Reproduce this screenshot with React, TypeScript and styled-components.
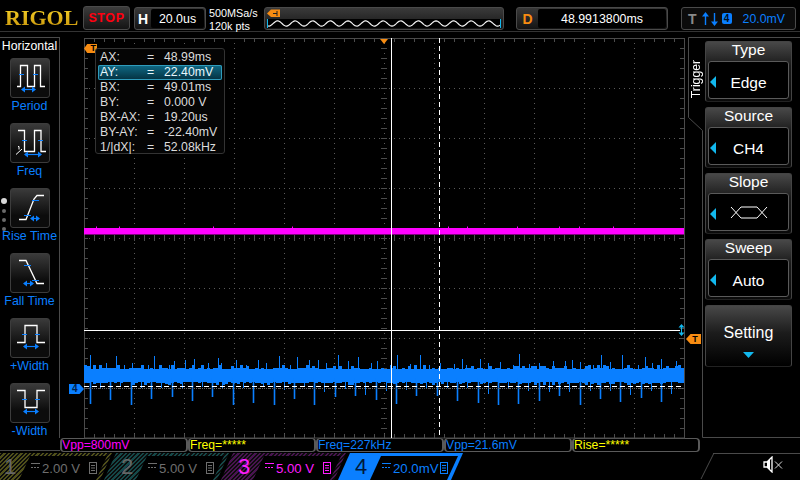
import React, { useMemo } from "react";
import styled, { createGlobalStyle } from "styled-components";

const BLUE = "#0a7fff";
const CYAN = "#12b8ee";
const ORANGE = "#f78c12";
const LINE = "#4a4a4a";

const Global = createGlobalStyle`
  html, body { margin: 0; padding: 0; background: #000; }
  body { font-family: "Liberation Sans", Arial, sans-serif; color: #fff; }
`;

const Page = styled.div`
  width: 800px;
  height: 480px;
  background: #000;
  overflow: hidden;
  display: flex;
  flex-direction: column;
`;

/* ---------- top bar ---------- */
const TopBar = styled.header`
  height: 32px;
  box-sizing: border-box;
  border-bottom: 1px solid #333;
  padding: 6px 0 0 5px;
  display: flex;
  align-items: flex-start;
`;
const Logo = styled.div`
  width: 74px;
  margin-top: 1px;
  font: bold 22px/21px "Liberation Serif", serif;
  background: linear-gradient(#f8d428, #c9960c);
  -webkit-background-clip: text;
  background-clip: text;
  color: transparent;
`;
const StopButton = styled.div`
  width: 47px;
  height: 24px;
  margin-left: 4px;
  box-sizing: border-box;
  border: 1px solid #4a4a4a;
  border-radius: 3px;
  background: linear-gradient(#3c3c3c, #141414);
  color: #ff0010;
  font-weight: bold;
  font-size: 12.5px;
  letter-spacing: 0.6px;
  line-height: 22px;
  text-align: center;
`;
const TopBox = styled.div<{ $w: number; $ml: number }>`
  width: ${(p) => p.$w}px;
  height: 23px;
  margin-left: ${(p) => p.$ml}px;
  margin-top: 1px;
  box-sizing: border-box;
  border: 1px solid #4a4a4a;
  border-radius: 3px;
  background: linear-gradient(#383838, #141414);
  display: flex;
  align-items: center;
`;
const BoxLetter = styled.span<{ $color: string; $w: number }>`
  width: ${(p) => p.$w}px;
  text-align: center;
  font-weight: bold;
  font-size: 14px;
  color: ${(p) => p.$color};
`;
const BoxValue = styled.span`
  flex: 1;
  align-self: stretch;
  margin: 1px 1px 1px 0;
  background: #000;
  border-radius: 2px;
  font-size: 12.4px;
  line-height: 20px;
  text-align: center;
`;
const SampleInfo = styled.div`
  width: 55px;
  margin-left: 3px;
  font-size: 10.8px;
  line-height: 13px;
  padding-top: 1px;
`;
const MemoryBar = styled.div`
  width: 240px;
  height: 23px;
  margin-top: 1px;
  box-sizing: border-box;
  border: 1px solid #4a4a4a;
  border-radius: 3px;
  background: linear-gradient(#3a3a3a, #161616);
  padding: 1px 3px 0 2px;
  display: flex;
  flex-direction: column;
`;
const MemoryTag = styled.svg`
  width: 14px;
  height: 9px;
  display: block;
`;
const MemoryWave = styled.svg`
  margin-top: 1px;
  width: 234px;
  height: 9px;
  display: block;
  background: #000;
`;
const TriggerBox = styled(TopBox)`
  background: #0c0c0c;
  padding-left: 6px;
`;
const TLetter = styled.span`
  font-weight: bold;
  font-size: 14px;
  color: #8a8a8a;
`;
const ArrowPair = styled.svg`
  width: 17px;
  height: 14px;
  margin-left: 5px;
`;
const SourceBadge = styled.span`
  width: 10px;
  height: 11px;
  margin-left: 3px;
  border-radius: 2px;
  background: ${BLUE};
  color: #001020;
  font-size: 10px;
  font-weight: bold;
  line-height: 11px;
  text-align: center;
`;
const TriggerLevel = styled.span`
  margin-left: 11px;
  font-size: 12.3px;
  color: ${BLUE};
`;

/* ---------- main ---------- */
const Main = styled.div`
  height: 420px;
  display: flex;
`;
const LeftColumn = styled.aside`
  width: 60px;
  flex: none;
  display: flex;
  flex-direction: column;
`;
const LeftFrame = styled.div`
  height: 401px;
  margin-top: 5px;
  box-sizing: border-box;
  border-top: 1px solid ${LINE};
  border-right: 1px solid ${LINE};
  position: relative;
`;
const LeftFoot = styled.div`
  margin-top: 12px;
  border-top: 1px solid ${LINE};
`;
const PanelTitle = styled.div`
  font-size: 12.3px;
  line-height: 16px;
  text-align: center;
  margin-bottom: 4px;
`;
const MeasureItem = styled.div`
  height: 65px;
  display: flex;
  flex-direction: column;
  align-items: center;
`;
const IconButton = styled.div`
  width: 40px;
  height: 40px;
  box-sizing: border-box;
  border: 1px solid #3c3c3c;
  border-radius: 3px;
  background: linear-gradient(#3a3a3a, #0c0c0c 70%);
  flex: none;
`;
const MeasureIcon = styled.svg`
  width: 38px;
  height: 38px;
  display: block;
`;
const MeasureLabel = styled.div`
  font-size: 12.4px;
  line-height: 16px;
  white-space: nowrap;
  color: ${BLUE};
`;
const PageDots = styled.div`
  position: absolute;
  left: 1px;
  top: 160px;
  display: flex;
  flex-direction: column;
  gap: 5px;
  align-items: center;
`;
const PageDot = styled.span<{ $on?: boolean }>`
  width: ${(p) => (p.$on ? 6 : 4)}px;
  height: ${(p) => (p.$on ? 6 : 4)}px;
  border-radius: 50%;
  background: ${(p) => (p.$on ? "#d8d8d8" : "#6a6a6a")};
`;

const CenterColumn = styled.main`
  width: 624px;
  flex: none;
  padding-top: 6px;
`;
const Screen = styled.div`
  margin-left: 24px;
  width: 600px;
  height: 400px;
  position: relative;
`;
const ScopeSvg = styled.svg`
  display: block;
  width: 600px;
  height: 400px;
  overflow: visible;
`;
const CursorBox = styled.div`
  position: absolute;
  left: 11px;
  top: 10px;
  width: 130px;
  height: 106px;
  box-sizing: border-box;
  padding: 1px 2px;
  background: #050505;
  border: 1px solid #333;
  border-radius: 3px;
`;
const CursorRow = styled.div<{ $active?: boolean }>`
  height: 15px;
  box-sizing: border-box;
  display: grid;
  grid-template-columns: 47px 17px 1fr;
  padding-left: 2px;
  font-size: 12.3px;
  line-height: 15px;
  color: ${(p) => (p.$active ? "#e8f6fb" : "#dcdcdc")};
  border-radius: 2px;
  ${(p) =>
    p.$active
      ? `background: linear-gradient(#0f6a86, #04303f); box-shadow: inset 0 0 0 1px #2f9cbc;`
      : ""}
`;
const TopLeftTag = styled.div`
  position: absolute;
  left: 0;
  top: 6px;
  width: 13px;
  height: 9px;
  background: ${ORANGE};
  clip-path: polygon(0 50%, 25% 0, 100% 0, 100% 100%, 25% 100%);
  color: #000;
  font-size: 9px;
  font-weight: bold;
  line-height: 9px;
  text-align: right;
  padding-right: 1px;
  box-sizing: border-box;
`;
const TimeMarker = styled.div`
  position: absolute;
  left: 296px;
  top: 1px;
  width: 8px;
  height: 5px;
  background: ${ORANGE};
  clip-path: polygon(0 0, 100% 0, 50% 100%);
`;
const ChannelMarker = styled.div`
  position: absolute;
  left: -15px;
  top: 346px;
  width: 15px;
  height: 10px;
  background: ${BLUE};
  clip-path: polygon(0 0, 70% 0, 100% 50%, 70% 100%, 0 100%);
  color: #00224a;
  font-size: 10px;
  font-weight: bold;
  line-height: 10px;
  padding-left: 3px;
  box-sizing: border-box;
`;
const LevelTag = styled.div`
  position: absolute;
  left: 602px;
  top: 296px;
  width: 15px;
  height: 10px;
  background: ${ORANGE};
  clip-path: polygon(0 50%, 30% 0, 100% 0, 100% 100%, 30% 100%);
  color: #000;
  font-size: 9px;
  font-weight: bold;
  line-height: 10px;
  text-align: center;
  padding-left: 3px;
  box-sizing: border-box;
`;
const LevelArrow = styled.svg`
  position: absolute;
  left: 594px;
  top: 286px;
  width: 7px;
  height: 12px;
`;

const MeasureRow = styled.div`
  width: 640px;
  height: 14px;
  display: flex;
`;
const Readout = styled.div<{ $color: string }>`
  flex: 1;
  box-sizing: border-box;
  border: 1px solid #5a5a5a;
  border-width: 1px 2px;
  border-radius: 4px;
  font-size: 12.2px;
  line-height: 13px;
  color: ${(p) => p.$color};
  white-space: nowrap;
  overflow: hidden;
`;

const RightColumn = styled.aside`
  width: 116px;
  flex: none;
  position: relative;
  padding: 9px 0 0 21px;
  box-sizing: border-box;
  display: flex;
  flex-direction: column;
  gap: 5px;
`;
const RightOutline = styled.svg`
  position: absolute;
  left: 0;
  top: 0;
  width: 116px;
  height: 420px;
`;
const TriggerLabel = styled.div`
  position: absolute;
  left: 6px;
  top: 28px;
  writing-mode: vertical-rl;
  transform: rotate(180deg);
  font-size: 12.2px;
  line-height: 13px;
`;
const MenuCard = styled.div`
  position: relative;
  width: 87px;
  height: 61px;
  box-sizing: border-box;
  border: 1px solid #444;
  border-bottom-color: #222;
  border-radius: 3px;
  background: linear-gradient(#484848, #1a1a1a 40%, #0a0a0a);
  padding: 0 2px 2px;
  display: flex;
  flex-direction: column;
`;
const MenuTitle = styled.div`
  height: 19px;
  font-size: 15.5px;
  line-height: 16px;
  text-align: center;
  flex: none;
`;
const MenuValue = styled.div`
  flex: 1;
  position: relative;
  background: #000;
  border: 1px solid #5a5a5a;
  border-radius: 3px;
  box-sizing: border-box;
  padding-top: 6px;
  font-size: 15.5px;
  display: flex;
  align-items: center;
  justify-content: center;
`;
const MenuArrow = styled.span`
  position: absolute;
  left: 1px;
  top: 50%;
  margin-top: -4px;
  width: 6px;
  height: 12px;
  background: ${CYAN};
  clip-path: polygon(100% 0, 100% 100%, 0 50%);
`;
const SettingCard = styled(MenuCard)`
  height: 62px;
  background: linear-gradient(#484848, #1c1c1c 45%, #000);
  align-items: center;
  padding-top: 17px;
  font-size: 16px;
  line-height: 20px;
`;
const SettingArrow = styled.span`
  margin-top: 9px;
  width: 11px;
  height: 6px;
  background: ${CYAN};
  clip-path: polygon(0 0, 100% 0, 50% 100%);
`;
const SlopeIcon = styled.svg`
  width: 38px;
  height: 13px;
  margin-top: -6px;
`;

/* ---------- channel bar ---------- */
const ChannelBar = styled.footer`
  height: 28px;
  display: flex;
  padding-top: 1px;
  box-sizing: border-box;
  margin-left: -13px;
`;
const hatch = (c: string) =>
  `repeating-linear-gradient(135deg, ${c} 0 1.5px, #0c0c0c 1.5px 3px)`;
const ChannelTab = styled.div<{ $hatch?: string; $color: string }>`
  width: 125px;
  height: 27px;
  margin-right: -8px;
  flex: none;
  position: relative;
  background: ${(p) => (p.$hatch ? hatch(p.$hatch) : p.$color)};
  clip-path: polygon(12px 0, 100% 0, calc(100% - 12px) 100%, 0 100%);
  display: flex;
  align-items: flex-end;
`;
const ChannelNumber = styled.span<{ $color: string }>`
  width: 34px;
  padding-left: 17px;
  box-sizing: border-box;
  font-size: 22px;
  line-height: 27px;
  height: 27px;
  flex: none;
  color: ${(p) => p.$color};
`;
const ChannelInner = styled.div<{ $color: string }>`
  width: 88px;
  height: 24px;
  margin-left: -2px;
  background: #000;
  clip-path: polygon(11px 0, 100% 0, calc(100% - 11px) 100%, 0 100%);
  color: ${(p) => p.$color};
  display: flex;
  align-items: center;
  padding-left: 12px;
  box-sizing: border-box;
  font-size: 13.2px;
`;
const CouplingIcon = styled.svg`
  width: 9px;
  height: 7px;
  margin: -5px 2px 0 0;
  flex: none;
`;
const ChannelValue = styled.span`
  width: 47px;
  flex: none;
`;
const UnitBox = styled.svg`
  width: 8px;
  height: 12px;
  flex: none;
`;
const SoundArea = styled.div`
  position: relative;
  margin-left: auto;
  width: 87px;
  height: 26px;
  border-top: 1px solid ${LINE};
  display: flex;
  justify-content: flex-end;
  padding: 2px 16px 0 0;
  box-sizing: border-box;
  &::before {
    content: "";
    position: absolute;
    left: 0;
    top: 0;
    width: 1px;
    height: 100%;
    background: ${LINE};
    transform-origin: top left;
    transform: skewX(-26.6deg);
  }
`;
const SpeakerIcon = styled.svg`
  width: 21px;
  height: 17px;
`;

/* ---------- drawings ---------- */
type IconDef = {
  wave: string;
  marks: string;
  arrow: [number, number, number];
  half?: boolean;
};
const icons: Record<string, IconDef> = {
  Period: {
    wave: "M6 27.5H9.5V6.5H16.5V27.5H23.5V6.5H29.5V27.5H34",
    marks: "M8 15.5h5M22 15.5h5",
    arrow: [11, 24, 30],
  },
  Freq: {
    wave: "M7 6.5H13.5V27.5H23.5V6.5H30V27.5H35",
    marks: "M11 16.5h5M27 16.5h5",
    arrow: [14, 30, 30],
    half: true,
  },
  "Rise Time": {
    wave: "M8 30.5H15L23 10L26 6.5H33",
    marks: "M21 11.5h7M13 26.5h7",
    arrow: [20, 28, 29],
  },
  "Fall Time": {
    wave: "M8 6.5H15L26 29.5H33",
    marks: "M13 11.5h7M21 26.5h7",
    arrow: [13, 22, 29],
  },
  "+Width": {
    wave: "M6 23.5H14V6.5H26V23.5H34",
    marks: "M11 15.5h5M24 15.5h5",
    arrow: [13, 27, 27],
  },
  "-Width": {
    wave: "M6 6.5H14V23.5H26V6.5H34",
    marks: "M11 15.5h5M24 15.5h5",
    arrow: [13, 27, 27],
  },
};

const PulseIcon = ({ def }: { def: IconDef }) => {
  const [a, b, y] = def.arrow;
  return (
    <MeasureIcon viewBox="0 0 38 38">
      <path d={def.wave} fill="none" stroke="#fff" strokeWidth="1.3" />
      <path d={def.marks} fill="none" stroke={BLUE} strokeWidth="1" />
      <path d={`M${a} ${y + 0.5}H${b}`} stroke={BLUE} strokeWidth="1.2" />
      <path d={`M${a - 1} ${y + 0.5}l4 -3v6zM${b + 1} ${y + 0.5}l-4 -3v6z`} fill={BLUE} />
      {def.half && (
        <>
          <path d="M7 22.5h1v3" fill="none" stroke="#fff" strokeWidth="1" />
          <path d="M5 30.5L11 25" fill="none" stroke="#fff" strokeWidth="1" />
        </>
      )}
    </MeasureIcon>
  );
};

const rng = (seed: number) => {
  let s = seed;
  return () => {
    s = (s * 16807) % 2147483647;
    return s / 2147483647;
  };
};

const useScopeTraces = () =>
  useMemo(() => {
    const r = rng(12345);
    let band = "";
    let spikes = "";
    let thick = "";
    let magenta = "";
    let top = 330;
    let bot = 344;
    for (let x = 0; x < 600; x += 1) {
      if (x % 3 === 0) {
        top = 330 + Math.floor(r() * 2) - (r() > 0.8 ? 3 : 0);
        bot = 344 + Math.floor(r() * 2) + (r() > 0.8 ? 2 : 0);
      }
      band += `M${x + 0.5} ${top}V${bot}`;
      magenta += `M${x + 0.5} ${r() > 0.97 ? 188.5 : 190}V196.5`;
    }
    for (let x = 6; x < 585; x += 20.4) {
      const px = Math.round(x) + 0.5;
      thick += `M${px} 340V${358 + Math.floor(r() * 10)}`;
      spikes += `M${px + 10} 340V${349 + Math.floor(r() * 9)}`;
      spikes += `M${Math.round(x + r() * 6) + 0.5} ${316 + Math.floor(r() * 10)}V332`;
      spikes += `M${Math.round(x + 8 + r() * 10) + 0.5} ${322 + Math.floor(r() * 6)}V332`;
    }
    let ticks = "";
    for (let x = 10; x < 600; x += 10) {
      ticks += `M${x + 0.5} 0V${x % 50 === 0 ? 0 : 4}M${x + 0.5} 400V396`;
      ticks += `M${x + 0.5} 197V203`;
    }
    for (let y = 10; y < 400; y += 10) {
      ticks += `M0 ${y + 0.5}H4M600 ${y + 0.5}H596M297 ${y + 0.5}H303`;
    }
    let memory = "M0 7";
    for (let x = 0; x < 234; x += 1) {
      memory += `L${x} ${4.5 - 2.6 * Math.sin((x / 17.6) * 2 * Math.PI - 2.2)}`;
    }
    return { band, spikes, thick, magenta, ticks, memory };
  }, []);

const gridV = [50, 100, 150, 200, 250, 300, 350, 400, 450, 500, 550];
const gridH = [50, 100, 150, 200, 250, 300, 350];

const cursorRows = [
  ["AX:", "48.99ms"],
  ["AY:", "22.40mV"],
  ["BX:", "49.01ms"],
  ["BY:", "0.000 V"],
  ["BX-AX:", "19.20us"],
  ["BY-AY:", "-22.40mV"],
  ["1/|dX|:", "52.08kHz"],
];
const readouts: [string, string][] = [
  ["Vpp=800mV", "#ff00ff"],
  ["Freq=*****", "#ffff00"],
  ["Freq=227kHz", BLUE],
  ["Vpp=21.6mV", BLUE],
  ["Rise=*****", "#ffff00"],
];
const channels = [
  { n: "1", v: "2.00 V", color: "#6e6e6e", num: "#666", hatch: "#50501a" },
  { n: "2", v: "5.00 V", color: "#6e6e6e", num: "#666", hatch: "#154848" },
  { n: "3", v: "5.00 V", color: "#ff1cff", num: "#ff1cff", hatch: "#481450" },
  { n: "4", v: "20.0mV", color: BLUE, num: "#001a3a" },
];
const menus: [string, string | null][] = [
  ["Type", "Edge"],
  ["Source", "CH4"],
  ["Slope", null],
  ["Sweep", "Auto"],
];

export default function App() {
  const t = useScopeTraces();
  return (
    <Page>
      <Global />
      <TopBar>
        <Logo>RIGOL</Logo>
        <StopButton>STOP</StopButton>
        <TopBox $w={72} $ml={4}>
          <BoxLetter $color="#fff" $w={16}>H</BoxLetter>
          <BoxValue>20.0us</BoxValue>
        </TopBox>
        <SampleInfo>
          500MSa/s
          <br />
          120k pts
        </SampleInfo>
        <MemoryBar>
          <MemoryTag viewBox="0 0 14 9">
            <path d="M0 4.5L4 0.5H13V8H4Z" fill={ORANGE} />
            <path d="M6 4.5H10M10 2V7" stroke="#222" fill="none" />
          </MemoryTag>
          <MemoryWave viewBox="0 0 234 9">
            <path d={t.memory} fill="none" stroke="#f4f4f4" strokeWidth="1.2" />
            <rect x="0" y="0" width="1" height="9" fill={CYAN} />
            <rect x="233" y="0" width="1" height="9" fill={CYAN} />
          </MemoryWave>
        </MemoryBar>
        <TopBox $w={152} $ml={12}>
          <BoxLetter $color={ORANGE} $w={21}>D</BoxLetter>
          <BoxValue>48.9913800ms</BoxValue>
        </TopBox>
        <TriggerBox $w={115} $ml={13}>
          <TLetter>T</TLetter>
          <ArrowPair viewBox="0 0 17 14">
            <path d="M3.5 2V13M12.5 1V12" stroke={BLUE} strokeWidth="1.4" />
            <path d="M3.5 0L7 4.5H0ZM12.5 14L9 9.5H16Z" fill={BLUE} />
          </ArrowPair>
          <SourceBadge>4</SourceBadge>
          <TriggerLevel>20.0mV</TriggerLevel>
        </TriggerBox>
      </TopBar>
      <Main>
        <LeftColumn>
          <LeftFrame>
            <PanelTitle>Horizontal</PanelTitle>
            <PageDots>
              <PageDot $on />
              <PageDot />
              <PageDot />
              <PageDot />
            </PageDots>
            {Object.entries(icons).map(([name, def]) => (
              <MeasureItem key={name}>
                <IconButton>
                  <PulseIcon def={def} />
                </IconButton>
                <MeasureLabel>{name}</MeasureLabel>
              </MeasureItem>
            ))}
          </LeftFrame>
          <LeftFoot />
        </LeftColumn>
        <CenterColumn>
          <Screen>
            <ScopeSvg viewBox="0 0 600 400">
              {gridV.map((x) => (
                <path key={x} d={`M${x + 0.5} 0V400`} stroke="#5a5a5a" strokeWidth="1" strokeDasharray="1 4" />
              ))}
              {gridH.map((y) => (
                <path key={y} d={`M0 ${y + 0.5}H600`} stroke="#5a5a5a" strokeWidth="1" strokeDasharray="1 4" />
              ))}
              <path d={t.ticks} stroke="#4c4c4c" strokeWidth="1" fill="none" />
              <rect x="0.5" y="0.5" width="600" height="399.5" fill="none" stroke="#4a4a4a" />
              <path d={t.magenta} stroke="#ff00ff" strokeWidth="1" />
              <path d="M0 292.5H596" stroke="#fff" strokeWidth="1" />
              <path d={t.band} stroke={BLUE} strokeWidth="1" />
              <path d={t.spikes} stroke={BLUE} strokeWidth="1" />
              <path d={t.thick} stroke={BLUE} strokeWidth="1.6" />
              <path d="M0 350.5H600" stroke="#666" strokeWidth="1" strokeDasharray="1 1" />
              <path d="M0 348.5H600" stroke="#fff" strokeWidth="1" strokeDasharray="5 3" />
              <path d="M307.5 0V400" stroke="#fff" strokeWidth="1" />
              <path d="M355.5 0V400" stroke="#fff" strokeWidth="1" strokeDasharray="5 3" />
            </ScopeSvg>
            <TopLeftTag>T</TopLeftTag>
            <TimeMarker />
            <CursorBox>
              {cursorRows.map(([k, v]) => (
                <CursorRow key={k} $active={k === "AY:"}>
                  <span>{k}</span>
                  <span>=</span>
                  <span>{v}</span>
                </CursorRow>
              ))}
            </CursorBox>
            <ChannelMarker>4</ChannelMarker>
            <LevelArrow viewBox="0 0 7 12">
              <path d="M3.5 2V10" stroke={CYAN} />
              <path d="M3.5 0L6.5 3.5H0.5ZM3.5 12L0.5 8.5H6.5Z" fill={CYAN} />
            </LevelArrow>
            <LevelTag>T</LevelTag>
          </Screen>
          <MeasureRow>
            {readouts.map(([text, c], i) => (
              <Readout key={i} $color={c}>{text}</Readout>
            ))}
          </MeasureRow>
        </CenterColumn>
        <RightColumn>
          <RightOutline viewBox="0 0 116 420">
            <path d="M116 5.5H4.5V85.5L18.5 98.5V405.5H116" fill="none" stroke={LINE} />
          </RightOutline>
          <TriggerLabel>Trigger</TriggerLabel>
          {menus.map(([title, value]) => (
            <MenuCard key={title}>
              <MenuTitle>{title}</MenuTitle>
              <MenuValue>
                <MenuArrow />
                {value ?? (
                  <SlopeIcon viewBox="0 0 38 13">
                    <path
                      d="M1 1L11 12M1 12L11 1H27L37 12M11 12H27L37 1"
                      fill="none"
                      stroke="#fff"
                      strokeWidth="1"
                    />
                  </SlopeIcon>
                )}
              </MenuValue>
            </MenuCard>
          ))}
          <SettingCard>
            Setting
            <SettingArrow />
          </SettingCard>
        </RightColumn>
      </Main>
      <ChannelBar>
        {channels.map((c) => (
          <ChannelTab key={c.n} $hatch={c.hatch} $color={c.color}>
            <ChannelNumber $color={c.num}>{c.n}</ChannelNumber>
            <ChannelInner $color={c.color}>
              <CouplingIcon viewBox="0 0 9 7">
                <path d="M0 1.5H9" stroke={c.color} />
                <path d="M0 5.5H9" stroke={c.color} strokeDasharray="2 1" />
              </CouplingIcon>
              <ChannelValue>{c.v}</ChannelValue>
              <UnitBox viewBox="0 0 8 12">
                <rect x="0.5" y="0.5" width="7" height="11" fill="none" stroke={c.color} />
                <path d="M2 3.5H6M2 6H6M2 8.5H6" stroke={c.color} />
              </UnitBox>
            </ChannelInner>
          </ChannelTab>
        ))}
        <SoundArea>
          <SpeakerIcon viewBox="0 0 21 17">
            <path d="M1 6H4L9 1V16L4 11H1Z" fill="none" stroke="#fff" strokeWidth="1.3" />
            <path d="M4 6V11L7 14V3Z" fill="#fff" />
            <path d="M12 5.5L19 12.5M19 5.5L12 12.5" stroke="#ddd" strokeWidth="1" />
          </SpeakerIcon>
        </SoundArea>
      </ChannelBar>
    </Page>
  );
}
